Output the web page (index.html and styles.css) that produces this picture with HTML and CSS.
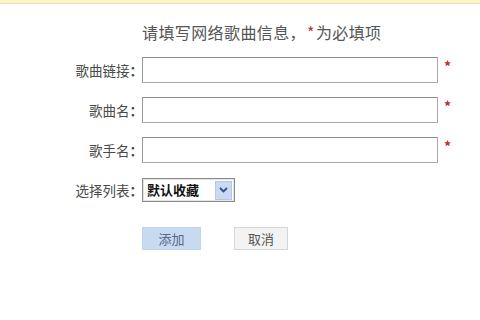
FILE: index.html
```html
<!DOCTYPE html>
<html lang="zh-CN">
<head>
<meta charset="utf-8">
<title>添加网络歌曲</title>
<link rel="stylesheet" href="styles.css">
</head>
<body>
<div class="topbar"></div>
<form class="song-form">
  <div class="title">请填写网络歌曲信息，<span class="req">*</span>为必填项</div>

  <label class="label">歌曲链接<span class="colon">：</span></label>
  <div class="field"><input class="text-input" type="text"><span class="star">*</span></div>

  <label class="label">歌曲名<span class="colon">：</span></label>
  <div class="field"><input class="text-input" type="text"><span class="star">*</span></div>

  <label class="label">歌手名<span class="colon">：</span></label>
  <div class="field"><input class="text-input" type="text"><span class="star">*</span></div>

  <label class="label">选择列表<span class="colon">：</span></label>
  <div class="field">
    <div class="select-box">
      <span class="select-text">默认收藏</span>
      <span class="select-arrow"><svg width="9" height="6" viewBox="0 0 9 6"><path d="M1 1 L4.5 4.5 L8 1" fill="none" stroke="#2f4f96" stroke-width="1.8"/></svg></span>
    </div>
  </div>

  <div class="buttons">
    <button type="button" class="btn btn-primary">添加</button>
    <button type="button" class="btn btn-cancel">取消</button>
  </div>
</form>
</body>
</html>
```
FILE: styles.css
```css
html, body {
  margin: 0;
  padding: 0;
  background: #ffffff;
  font-family: "Noto Sans CJK SC", "Noto Sans", sans-serif;
  color: #444;
}

.topbar {
  height: 3px;
  background: #fdf3cb;
  border-bottom: 1px solid #f3e2a6;
}

.song-form {
  display: grid;
  grid-template-columns: 140px 320px;
  column-gap: 2px;
  row-gap: 14px;
  align-items: center;
  padding-top: 19px;
}

.title {
  grid-column: 2;
  font-size: 16px;
  letter-spacing: 0.4px;
  line-height: 19px;
  color: #555;
  margin-bottom: 1px;
}

.req {
  color: #c0303a;
  margin: 0 1px;
}

.label {
  grid-column: 1;
  text-align: right;
  font-size: 13.5px;
  color: #4a4a4a;
  line-height: 26px;
  margin-right: -3px;
}

.colon {
  font-weight: bold;
}

.field {
  grid-column: 2;
  display: flex;
  align-items: flex-start;
  height: 26px;
}

.text-input {
  box-sizing: border-box;
  width: 296px;
  height: 26px;
  margin: 0;
  border: 1px solid #a9a9a9;
  border-top-color: #8f8f8f;
  border-left-color: #999;
  background: #fff;
  padding: 0 4px;
}

.star {
  color: #b03040;
  font-size: 14px;
  font-weight: bold;
  line-height: 14px;
  margin-left: 6px;
  margin-top: 2px;
}

.select-box {
  box-sizing: border-box;
  width: 93px;
  height: 24px;
  margin-top: 1px;
  border: 1px solid #8a8a8a;
  box-shadow: inset 0 0 0 1px #e4e4e4;
  display: flex;
  align-items: center;
  padding: 0 2px 0 4px;
  background: #fff;
}

.select-text {
  flex: 1;
  font-size: 13px;
  font-weight: bold;
  color: #111;
  line-height: 20px;
}

.select-arrow {
  width: 17px;
  height: 19px;
  background: #c9daf2;
  border: 1px solid #b3c7e6;
  box-sizing: border-box;
  display: flex;
  align-items: center;
  justify-content: center;
}

.buttons {
  grid-column: 2;
  display: flex;
  gap: 33px;
  margin-top: 10px;
}

.btn {
  height: 23px;
  padding: 0;
  font-family: inherit;
  font-size: 13px;
  line-height: 21px;
  cursor: pointer;
}

.btn-primary {
  width: 59px;
  background: #c8daf0;
  border: 1px solid #c0d3ec;
  color: #56688a;
}

.btn-cancel {
  width: 54px;
  background: #f3f3f3;
  border: 1px solid #d6d6d6;
  color: #555;
}
```
